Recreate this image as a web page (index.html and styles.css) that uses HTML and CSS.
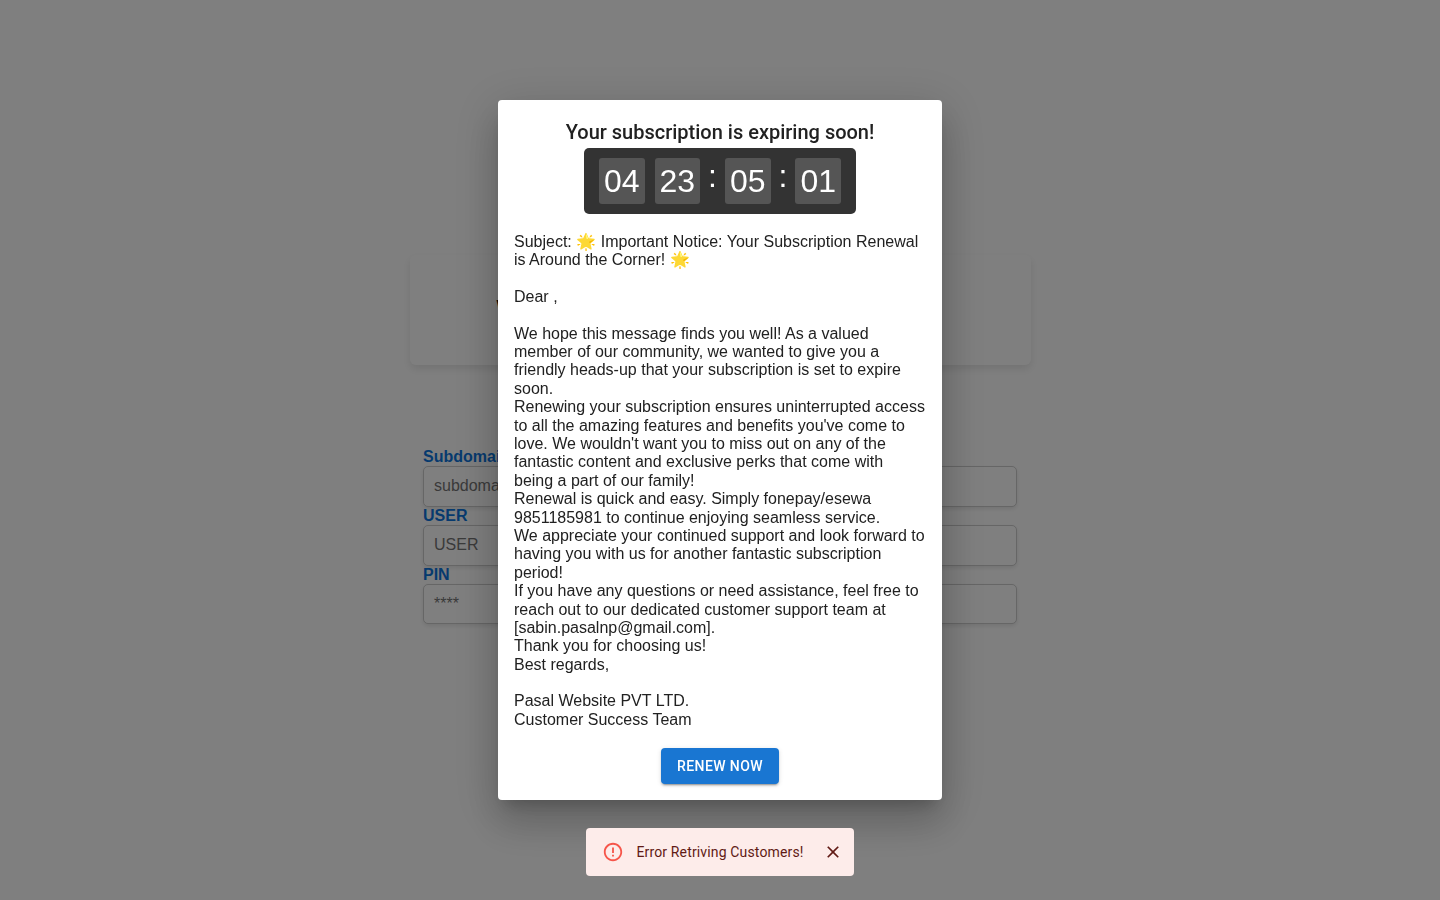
FILE: index.html
```html
<!DOCTYPE html>
<html lang="en">
<head>
<meta charset="utf-8">
<meta name="viewport" content="width=device-width, initial-scale=1">
<title>Subscription</title>
<link rel="stylesheet" href="styles.css">
</head>
<body>
<main class="page">
  <header class="banner"><h1 class="banner-title">Welcome</h1></header>
  <form class="login">
    <label class="login-label" for="subdomain">Subdomain</label>
    <input class="login-input" id="subdomain" type="text" placeholder="subdomain">
    <label class="login-label" for="user">USER</label>
    <input class="login-input" id="user" type="text" placeholder="USER">
    <label class="login-label" for="pin">PIN</label>
    <input class="login-input" id="pin" type="password" placeholder="****">
  </form>
</main>

<div class="backdrop">
  <section class="dialog" role="dialog" aria-modal="true" aria-labelledby="dialog-title">
    <h2 class="dialog-title" id="dialog-title">Your subscription is expiring soon!</h2>
    <div class="timer" role="timer">
      <span class="digits">04</span>
      <span class="digits">23</span>
      <span class="colon">:</span>
      <span class="digits">05</span>
      <span class="colon">:</span>
      <span class="digits">01</span>
    </div>
    <div class="message"><br>Subject: 🌟 Important Notice: Your Subscription Renewal is Around the Corner! 🌟<br><br>Dear ,<br><br>We hope this message finds you well! As a valued member of our community, we wanted to give you a friendly heads-up that your subscription is set to expire soon.<br>Renewing your subscription ensures uninterrupted access to all the amazing features and benefits you've come to love. We wouldn't want you to miss out on any of the fantastic content and exclusive perks that come with being a part of our family!<br>Renewal is quick and easy. Simply fonepay/esewa 9851185981 to continue enjoying seamless service.<br>We appreciate your continued support and look forward to having you with us for another fantastic subscription period!<br>If you have any questions or need assistance, feel free to reach out to our dedicated customer support team at [sabin.pasalnp@gmail.com].<br>Thank you for choosing us!<br>Best regards,<br><br>Pasal Website PVT LTD.<br>Customer Success Team<br><br></div>
    <button class="renew" type="button">RENEW NOW</button>
  </section>
</div>

<div class="snackbar-region">
  <div class="snackbar" role="alert">
    <svg class="snackbar-icon" viewBox="0 0 24 24" aria-hidden="true"><path d="M11 15h2v2h-2zm0-8h2v6h-2zm.99-5C6.47 2 2 6.48 2 12s4.47 10 9.99 10C17.52 22 22 17.52 22 12S17.52 2 11.99 2zM12 20c-4.42 0-8-3.58-8-8s3.58-8 8-8 8 3.58 8 8-3.58 8-8 8z"/></svg>
    <span class="snackbar-text">Error Retriving Customers!</span>
    <button class="snackbar-close" type="button" aria-label="Close">
      <svg class="close-icon" viewBox="0 0 24 24" aria-hidden="true"><path d="M19 6.41L17.59 5 12 10.59 6.41 5 5 6.41 10.59 12 5 17.59 6.41 19 12 13.41 17.59 19 19 17.59 13.41 12z"/></svg>
    </button>
  </div>
</div>
</body>
</html>
```
FILE: styles.css
```css
* {
  box-sizing: border-box;
}

body {
  margin: 0;
  background: #fff;
  color: #212121;
  font-family: "Liberation Sans", Arial, sans-serif;
  font-size: 16px;
  line-height: 1.15;
}

.page {
  display: flex;
  flex-direction: column;
  align-items: center;
  gap: 83px;
  min-height: 100vh;
  padding: 255px 16px 0;
}

.banner {
  display: flex;
  justify-content: center;
  width: 100%;
  max-width: 621px;
  padding: 36px 87px 38px;
  border-radius: 6px;
  box-shadow: 0 4px 8px rgba(0, 0, 0, 0.1);
}

.banner-title {
  flex: 1;
  margin: 0;
  color: #000;
  font-size: 24px;
  line-height: 36px;
}

.login {
  display: flex;
  flex-direction: column;
  width: 100%;
  max-width: 594px;
}

.login-label {
  color: #0d75dd;
  font-weight: 700;
}

.login-input {
  width: 100%;
  padding: 10px;
  border: 1px solid #ccc;
  border-radius: 5px;
  background: #fff;
  box-shadow: 0 2px 4px rgba(0, 0, 0, 0.1);
  font: inherit;
}

.login-input::placeholder {
  color: #757575;
}

.backdrop {
  position: fixed;
  inset: 0;
  display: flex;
  align-items: center;
  justify-content: center;
  background: rgba(0, 0, 0, 0.5);
}

.dialog {
  display: flex;
  flex-direction: column;
  align-items: center;
  width: 100%;
  max-width: 444px;
  padding: 16px;
  border-radius: 4px;
  background: #fff;
  box-shadow: 0 11px 15px -7px rgba(0, 0, 0, 0.2), 0 24px 38px 3px rgba(0, 0, 0, 0.14), 0 9px 46px 8px rgba(0, 0, 0, 0.12);
}

.dialog-title {
  margin: 0;
  font-family: Roboto, sans-serif;
  font-size: 20px;
  font-weight: 500;
  line-height: 32px;
}

.timer {
  display: flex;
  align-items: flex-start;
  padding: 10px;
  border-radius: 5px;
  background: #333;
  color: #fff;
  font-size: 32px;
  line-height: 36px;
}

.digits {
  margin: 0 5px;
  padding: 5px;
  border-radius: 3px;
  background: #555;
}

.colon {
  padding: 0 3px;
}

.message {
  align-self: stretch;
}

.renew {
  padding: 6px 16px;
  border: 0;
  border-radius: 4px;
  background: #1976d2;
  color: #fff;
  box-shadow: 0 3px 1px -2px rgba(0, 0, 0, 0.2), 0 2px 2px rgba(0, 0, 0, 0.14), 0 1px 5px rgba(0, 0, 0, 0.12);
  font-family: Roboto, sans-serif;
  font-size: 14px;
  font-weight: 500;
  letter-spacing: 0.02857em;
  line-height: 24px;
}

.snackbar-region {
  position: fixed;
  right: 8px;
  bottom: 24px;
  left: 8px;
  display: flex;
  justify-content: center;
}

.snackbar {
  display: flex;
  align-items: center;
  padding: 6px 8px 6px 16px;
  border-radius: 4px;
  background: #fdecea;
  color: #611a15;
  font-family: Roboto, sans-serif;
  font-size: 14px;
  letter-spacing: 0.01071em;
  line-height: 20px;
}

.snackbar-icon {
  width: 22px;
  height: 22px;
  margin-right: 12px;
  fill: #f6554a;
}

.snackbar-text {
  padding: 8px 0;
}

.snackbar-close {
  display: flex;
  margin-left: 16px;
  padding: 3px;
  border: 0;
  background: none;
  color: inherit;
}

.close-icon {
  width: 20px;
  height: 20px;
  fill: currentColor;
}
```
